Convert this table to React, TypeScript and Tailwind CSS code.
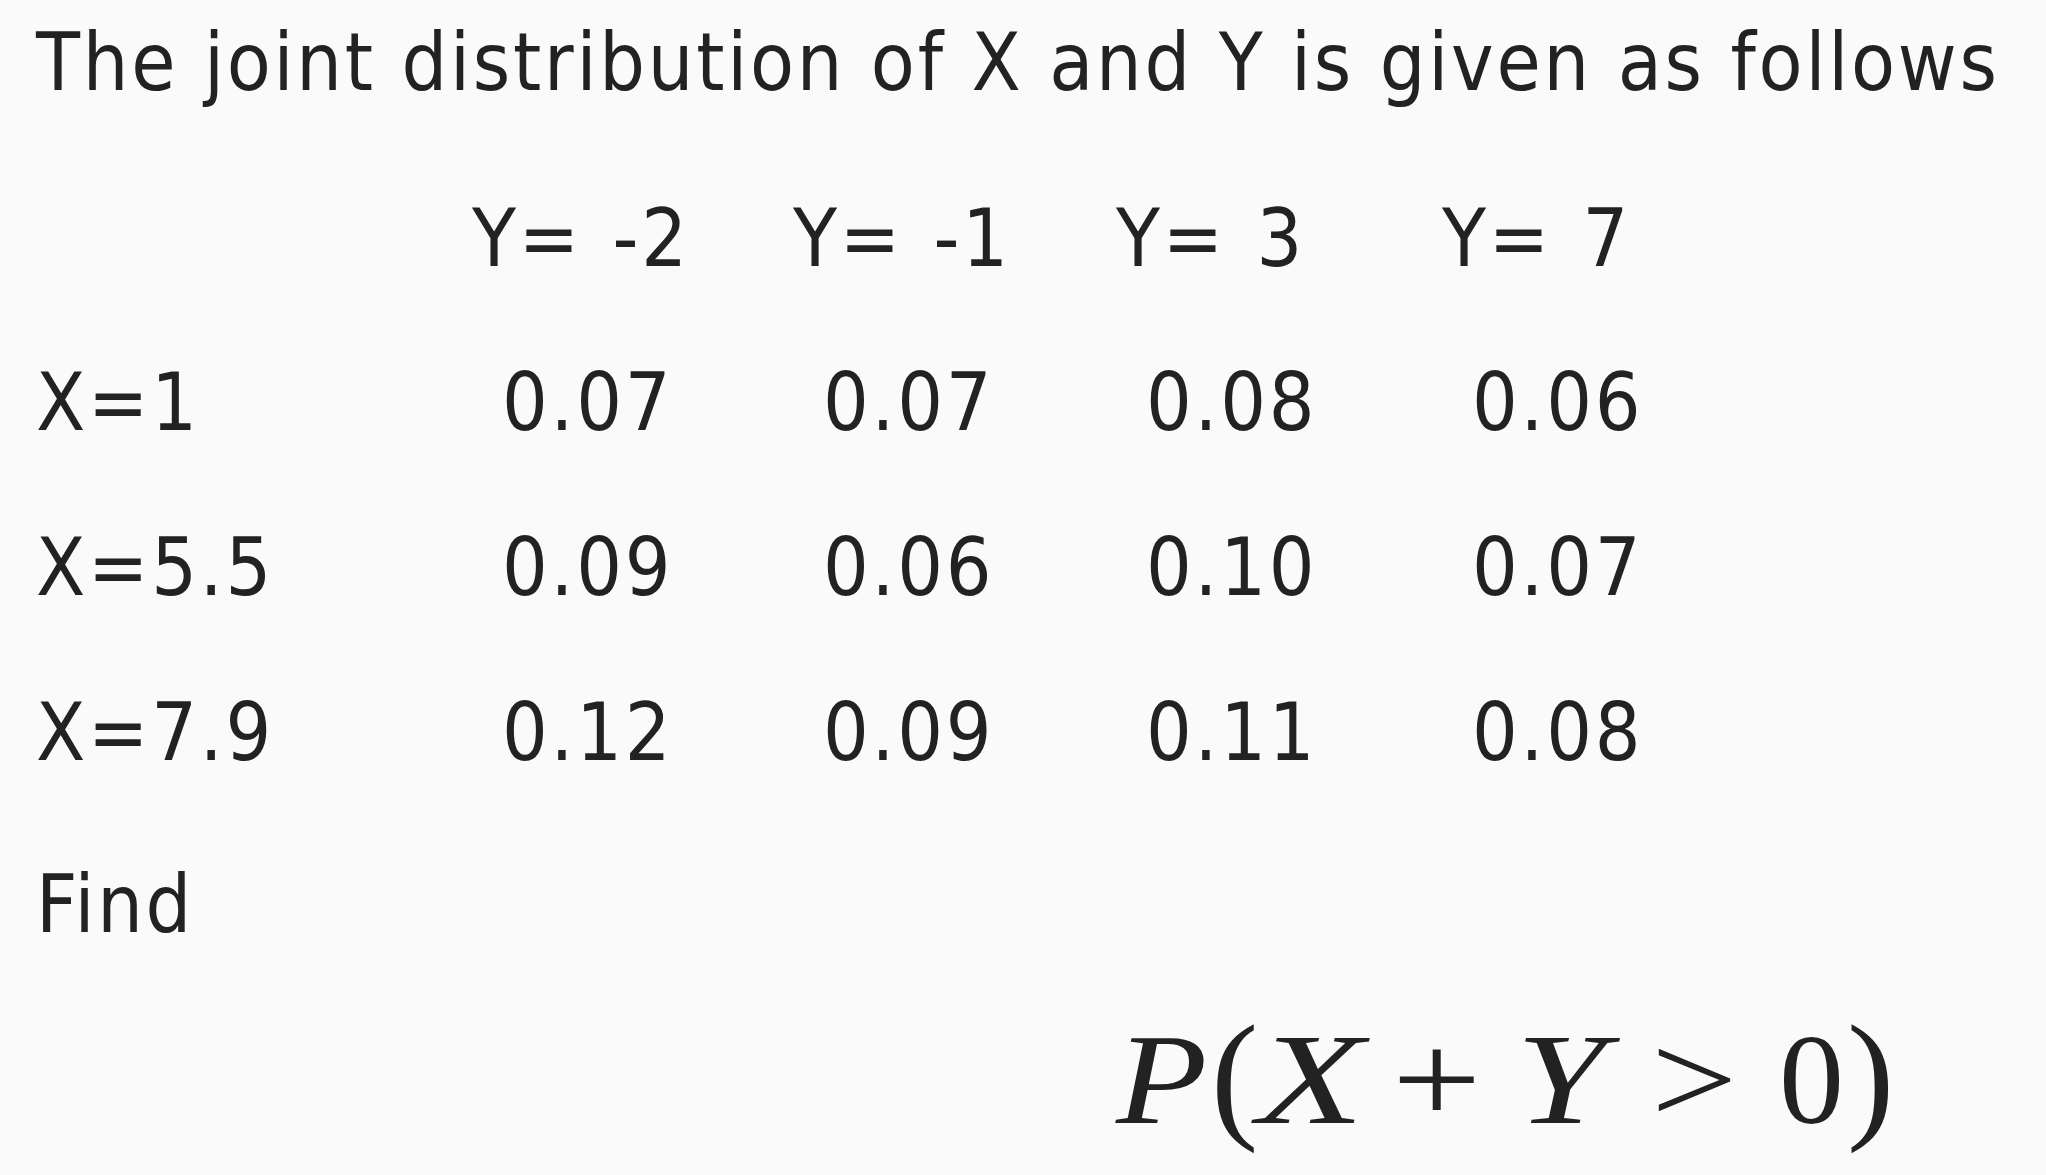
const header = ['Y= -2', 'Y= -1', 'Y= 3', 'Y= 7']

const rows = [
  { label: 'X=1', values: ['0.07', '0.07', '0.08', '0.06'], mt: 'mt-[64px]' },
  { label: 'X=5.5', values: ['0.09', '0.06', '0.10', '0.07'], mt: 'mt-[65px]' },
  { label: 'X=7.9', values: ['0.12', '0.09', '0.11', '0.08'], mt: 'mt-[65px]' },
]

const colWidths = ['w-[321px]', 'w-[323px]', 'w-[326px]', 'w-[326px]']

// P(X + Y > 0), laid out glyph by glyph so the widths come close to the TeX font
const MathLine = () => (
  <div className="mt-[45px] flex h-[150px] items-baseline pl-[1080px] font-['Liberation_Serif',serif] text-[130px] leading-[150px] tracking-normal text-[#222]">
    <span className="w-[95px]">
      <span className="inline-block origin-left scale-x-[1.15] italic">P</span>
    </span>
    <span className="w-[46px] text-[142px]">(</span>
    <span className="w-[135px]">
      <span className="inline-block origin-left scale-x-[1.35] italic">X</span>
    </span>
    <span className="w-[124px]">
      <span className="inline-block origin-left scale-x-[1.22]">+</span>
    </span>
    <span className="w-[135px]">
      <span className="inline-block origin-left scale-x-[1.24] italic">Y</span>
    </span>
    <span className="w-[128px]">
      <span className="inline-block origin-left scale-x-[1.18]">&gt;</span>
    </span>
    <span className="w-[68px]">0</span>
    <span className="text-[142px]">)</span>
  </div>
)

export default function App() {
  return (
    <div className="min-h-screen w-full bg-[#fafafa] pt-[13px] pl-[36px] font-['DejaVu_Sans_Condensed','DejaVu_Sans',sans-serif] text-[80px] leading-[100px] tracking-[2.8px] text-[#222]">
      <div className="h-[100px] whitespace-nowrap">
        The joint distribution of X and Y is given as follows
      </div>

      <div className="mt-[76px] flex h-[100px] whitespace-nowrap [word-spacing:5px]">
        <div className="w-[436px]" />
        {header.map((h, i) => (
          <div key={h} className={colWidths[i]}>
            {h}
          </div>
        ))}
      </div>

      {rows.map((row) => (
        <div key={row.label} className={`${row.mt} flex h-[100px] whitespace-nowrap`}>
          <div className="w-[436px]">{row.label}</div>
          {row.values.map((v, i) => (
            <div key={i} className={`${colWidths[i]} pl-[30px]`}>
              {v}
            </div>
          ))}
        </div>
      ))}

      <div className="mt-[72px] h-[100px]">Find</div>

      <MathLine />
    </div>
  )
}
